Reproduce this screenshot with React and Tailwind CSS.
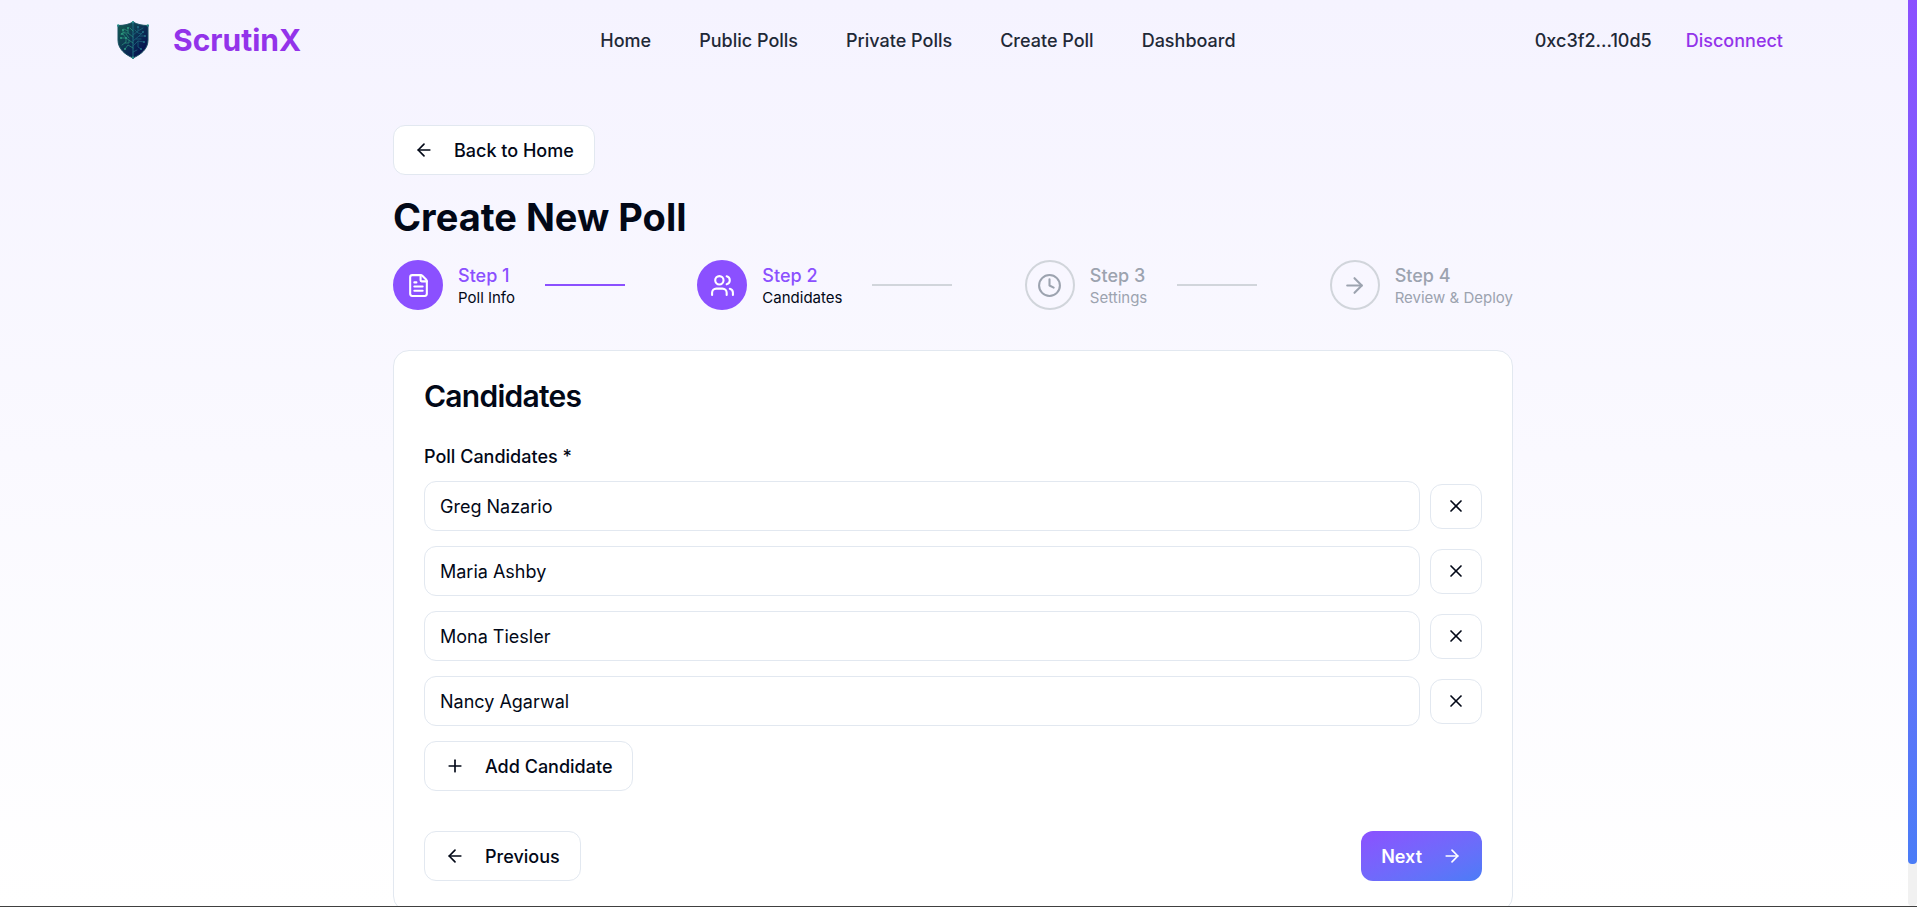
import { useState } from 'react'
import { ArrowLeft, ArrowRight, Clock, FileText, Plus, Users, X } from 'lucide-react'

const navLinks = ['Home', 'Public Polls', 'Private Polls', 'Create Poll', 'Dashboard']

const steps = [
  { title: 'Step 1', label: 'Poll Info', icon: FileText },
  { title: 'Step 2', label: 'Candidates', icon: Users },
  { title: 'Step 3', label: 'Settings', icon: Clock },
  { title: 'Step 4', label: 'Review & Deploy', icon: ArrowRight },
]

const outlineButton =
  'inline-flex items-center justify-center rounded-xl border border-slate-200 bg-white font-medium text-[#020817] hover:bg-slate-50'

function Logo() {
  return (
    <svg viewBox="0 0 32 38" className="h-[38px] w-8" aria-hidden="true">
      <defs>
        <linearGradient id="shield" x1="0" y1="0" x2="1" y2="1">
          <stop offset="0" stopColor="#14604f" />
          <stop offset="0.5" stopColor="#0c3054" />
          <stop offset="1" stopColor="#02024e" />
        </linearGradient>
        <linearGradient id="trace" x1="0" y1="0" x2="1" y2="1">
          <stop offset="0" stopColor="#2fae83" />
          <stop offset="1" stopColor="#1c5f8c" />
        </linearGradient>
      </defs>
      <path
        d="M16 1C12 3.500 6.500 4.500 1 4.500V19C1 28 8 33.500 16 37C24 33.500 31 28 31 19V4.500C25.500 4.500 20 3.500 16 1Z"
        fill="url(#shield)"
        stroke="#174f60"
        strokeWidth="1"
      />
      <g fill="none" stroke="#1f6f84" strokeWidth="0.8" strokeLinecap="round" opacity="0.85">
        <path d="M16 1V37" strokeWidth="1.2" />
        <path d="M16 16L11 12V7M11 12H6V9M16 22L9 17H4M9 17V21L5 24M16 27L11 24L8 28M13 7L16 10M6 13L9 17M4 13L8 11M12 17L9 13M7 8L11 10M12 19V22H8" stroke="#2f9a80" />
        <path d="M16 14L21 10V6M21 10L26 7M16 20L22 15H28M22 15L26 11M16 25L21 20L27 21M21 20V26L24 28M16 31L20 29M18 9L21 12L25 13M19 18L24 18" />
      </g>
      <g fill="#2fa384">
        <circle cx="11" cy="7" r="0.9" />
        <circle cx="6" cy="9" r="0.9" />
        <circle cx="5" cy="13" r="0.9" />
        <circle cx="4" cy="17" r="0.9" />
        <circle cx="9" cy="17" r="0.9" />
        <circle cx="8" cy="28" r="0.9" />
      </g>
      <g fill="#25788c">
        <circle cx="21" cy="6" r="0.9" />
        <circle cx="26" cy="11" r="0.9" />
        <circle cx="28" cy="15" r="0.9" />
        <circle cx="27" cy="21" r="0.9" />
        <circle cx="24" cy="28" r="0.9" />
      </g>
      <g fill="url(#trace)">
        <circle cx="1.200" cy="4.500" r="1.200" />
        <circle cx="30.800" cy="4.500" r="1.200" />
        <circle cx="16" cy="1.200" r="1.200" />
        <circle cx="16" cy="36.800" r="1.200" />
      </g>
    </svg>
  )
}

function Header() {
  return (
    <header className="flex h-20 items-center justify-between pl-[117px] pr-[123px]">
      <a href="#" className="flex items-center gap-6">
        <Logo />
        <span className="text-[30px] leading-9 font-bold text-[#9333ea]">ScrutinX</span>
      </a>
      <nav className="flex items-center gap-12">
        {navLinks.map((link) => (
          <a key={link} href="#" className="font-medium text-[#1f2937] hover:text-[#9333ea]">
            {link}
          </a>
        ))}
      </nav>
      <div className="flex items-center gap-[34px] font-medium">
        <span className="text-[#1f2937]">0xc3f2...10d5</span>
        <button type="button" className="text-[#9333ea]">Disconnect</button>
      </div>
    </header>
  )
}

function Stepper({ current }) {
  return (
    <ol className="mt-5 flex items-center justify-between">
      {steps.map((step, index) => {
        const Icon = step.icon
        const active = index + 1 <= current
        return (
          <li key={step.title} className="flex items-center">
            <div
              className={`flex size-[50px] items-center justify-center rounded-full border-2 ${
                active ? 'border-[#8b50ff] bg-[#8b50ff] text-white' : 'border-[#d1d5db] text-[#9ca3af]'
              }`}
            >
              <Icon size={25} />
            </div>
            <div className="ml-[15px] pt-0.5">
              <p className={`leading-6 font-medium ${active ? 'text-[#8b50ff]' : 'text-[#9ca3af]'}`}>{step.title}</p>
              <p className={`text-[15px] leading-5 ${active ? 'text-[#020817]' : 'text-[#9ca3af]'}`}>{step.label}</p>
            </div>
            {index < steps.length - 1 && (
              <div className={`ml-[30px] h-0.5 w-20 ${index + 1 < current ? 'bg-[#8b50ff]' : 'bg-[#d1d5db]'}`} />
            )}
          </li>
        )
      })}
    </ol>
  )
}

export default function App() {
  const [candidates, setCandidates] = useState(['Greg Nazario', 'Maria Ashby', 'Mona Tiesler', 'Nancy Agarwal'])

  const updateCandidate = (index, value) => {
    setCandidates(candidates.map((name, i) => (i === index ? value : name)))
  }

  const removeCandidate = (index) => {
    setCandidates(candidates.filter((_, i) => i !== index))
  }

  return (
    <div className="flex h-screen overflow-hidden border-b border-neutral-700 bg-linear-to-b from-[#f5f3ff] to-white font-[Inter,sans-serif] text-[18px] text-[#020817]">
      <div className="min-w-0 flex-1 pr-0.5">
        <Header />
        <main className="mx-auto mt-[45px] max-w-[1120px]">
          <button type="button" className={`${outlineButton} h-[50px] gap-5 px-5`}>
            <ArrowLeft size={20} />
            Back to Home
          </button>
          <h1 className="mt-5 text-[38px] leading-[45px] font-bold">Create New Poll</h1>
          <Stepper current={2} />

          <section className="mt-10 rounded-2xl border border-slate-200 bg-white p-[30px]">
            <h2 className="text-[30px] leading-[30px] font-semibold tracking-tight">Candidates</h2>
            <form className="mt-[33px]" onSubmit={(e) => e.preventDefault()}>
              <label htmlFor="candidate-0" className="block leading-[25px] font-medium">
                Poll Candidates *
              </label>
              <div className="mt-3 space-y-[15px]">
                {candidates.map((name, index) => (
                  <div key={index} className="flex items-center gap-2.5">
                    <input
                      id={`candidate-${index}`}
                      aria-label={`Candidate ${index + 1}`}
                      value={name}
                      onChange={(e) => updateCandidate(index, e.target.value)}
                      className="h-[50px] min-w-0 flex-1 rounded-xl border border-slate-200 bg-white px-[15px]"
                    />
                    <button
                      type="button"
                      aria-label={`Remove candidate ${index + 1}`}
                      onClick={() => removeCandidate(index)}
                      className={`${outlineButton} h-[45px] w-[52px]`}
                    >
                      <X size={20} />
                    </button>
                  </div>
                ))}
                <button
                  type="button"
                  onClick={() => setCandidates([...candidates, ''])}
                  className={`${outlineButton} h-[50px] gap-5 px-5`}
                >
                  <Plus size={20} />
                  Add Candidate
                </button>
              </div>
              <div className="mt-10 flex justify-between">
                <button type="button" className={`${outlineButton} h-[50px] gap-5 px-5`}>
                  <ArrowLeft size={20} />
                  Previous
                </button>
                <button
                  type="submit"
                  className="inline-flex h-[50px] items-center gap-5 rounded-xl bg-linear-to-br from-[#8b50ff] to-[#4a7cf7] px-5 font-semibold text-white"
                >
                  Next
                  <ArrowRight size={20} />
                </button>
              </div>
            </form>
          </section>
        </main>
      </div>
      {/* scroll track */}
      <div className="w-[9px] rounded bg-[#f1f1f1]">
        <div className="h-[95.4%] rounded-b bg-linear-to-b from-[#8b50ff] to-[#4a7cf7]" />
      </div>
    </div>
  )
}
